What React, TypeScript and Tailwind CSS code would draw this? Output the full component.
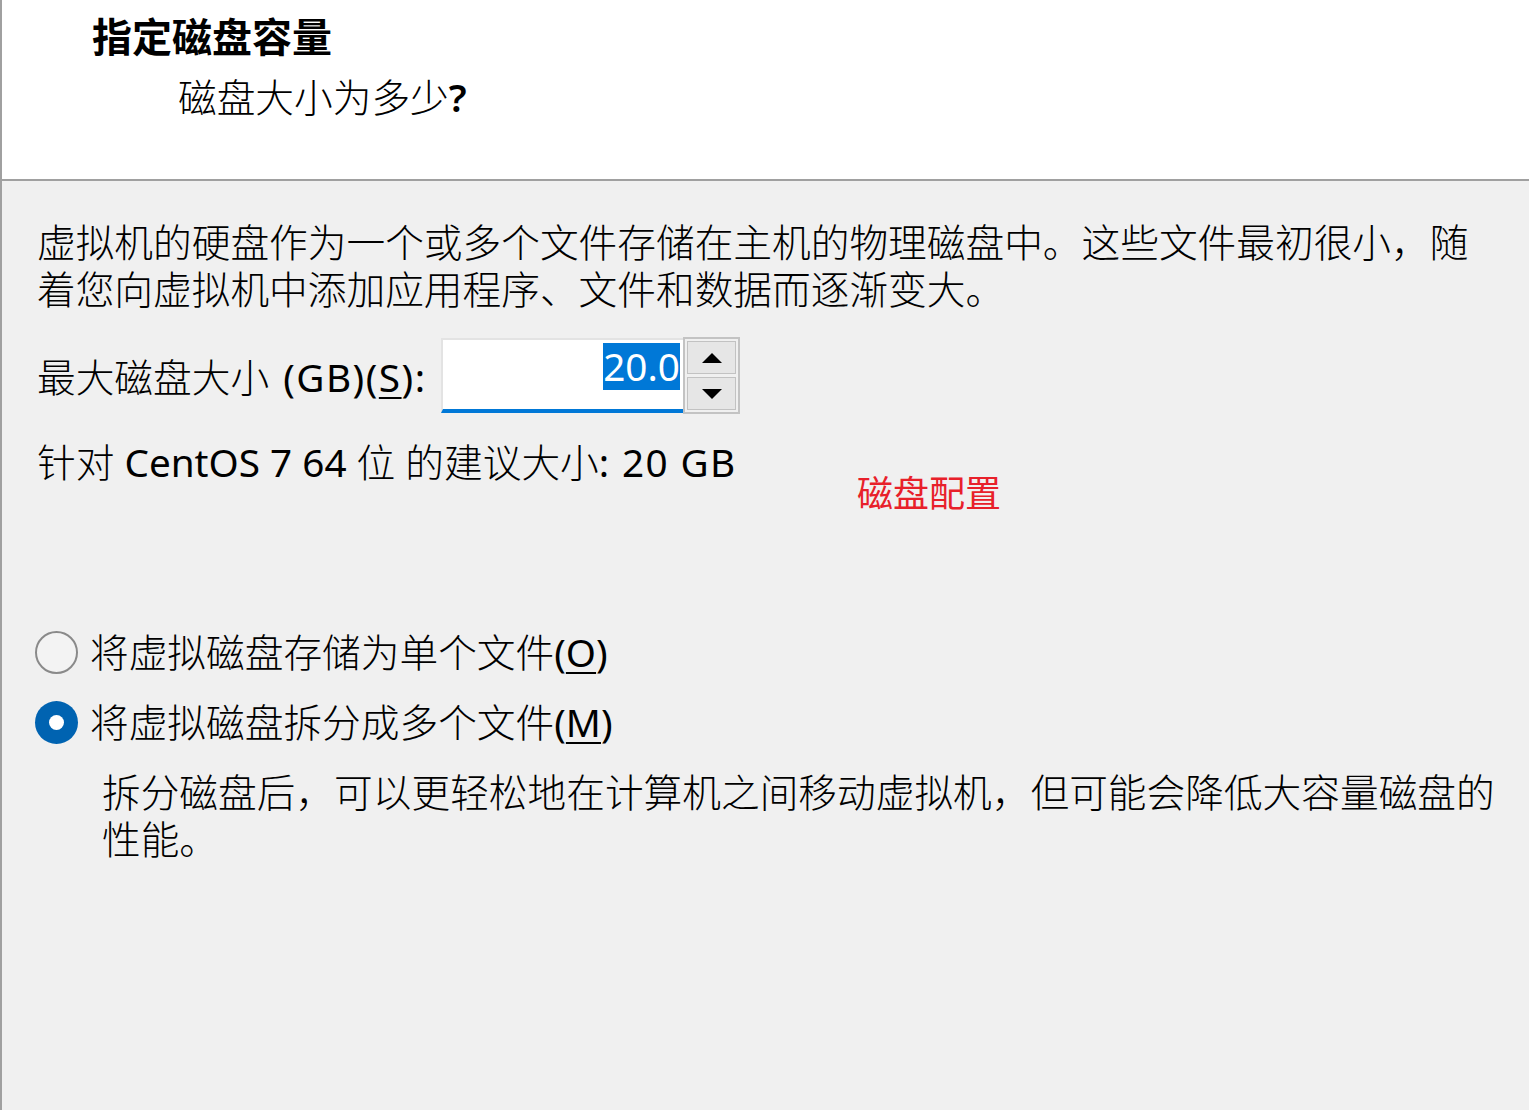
import React from "react";

const CJK = "font-[family-name:'Noto_Sans','Noto_Sans_CJK_SC',sans-serif]";

function Key({ children }: { children: React.ReactNode }) {
  // Windows-style access key: underlined letter
  return (
    <span className="underline decoration-[2px] underline-offset-[5px]">{children}</span>
  );
}

function Radio({ checked }: { checked?: boolean }) {
  if (checked) {
    return (
      <span className="flex h-[43px] w-[43px] shrink-0 items-center justify-center rounded-full bg-[#0063b1]">
        <span className="h-[15px] w-[15px] rounded-full bg-white" />
      </span>
    );
  }
  return (
    <span className="h-[43px] w-[43px] shrink-0 rounded-full border-2 border-[#8a8a8a] bg-[#f3f3f3]" />
  );
}

function Spinner() {
  return (
    <div className="flex h-[77px] w-[57px] shrink-0 flex-col gap-[3px] border-2 border-[#c3c3c3] bg-[#f0f0f0] p-[2px]">
      <button className="flex flex-1 items-center justify-center border border-[#c2c2c2] bg-[#e6e6e6]">
        <svg width="20" height="10" viewBox="0 0 20 10">
          <path d="M10 0 L20 10 L0 10 Z" fill="#000" />
        </svg>
      </button>
      <button className="flex flex-1 items-center justify-center border border-[#c2c2c2] bg-[#e6e6e6]">
        <svg width="20" height="10" viewBox="0 0 20 10">
          <path d="M0 0 L20 0 L10 10 Z" fill="#000" />
        </svg>
      </button>
    </div>
  );
}

export default function App() {
  return (
    <div
      className={`relative flex h-screen flex-col overflow-hidden border-l-2 border-[#a0a0a0] bg-[#f0f0f0] text-black ${CJK}`}
    >
      <header className="h-[181px] shrink-0 border-b-2 border-[#a0a0a0] bg-white pl-[90px] pt-[13px]">
        <h1 className="text-[40px] font-bold leading-[48px]">指定磁盘容量</h1>
        <p className="ml-[86px] mt-[12px] text-[38.7px] font-light leading-[48px]">
          磁盘大小为多少<span className="font-semibold">?</span>
        </p>
      </header>

      <main className="pl-[35px] pt-[38px] text-[38.7px] font-light leading-[47px]">
        <p className="w-[1450px]">
          虚拟机的硬盘作为一个或多个文件存储在主机的物理磁盘中。这些文件最初很小，随着您向虚拟机中添加应用程序、文件和数据而逐渐变大。
        </p>

        <div className="mt-[24px] flex h-[77px] items-center">
          <label className="w-[404px] shrink-0 pt-[3px]">
            最大磁盘大小{" "}
            <span className="ml-[4px] font-normal tracking-[1.5px]">
              (GB)(<Key>S</Key>):
            </span>
          </label>
          <div className="flex h-[75px] w-[242px] shrink-0 justify-end border-l-2 border-t-2 border-b-[4px] border-l-[#e3e3e3] border-t-[#e3e3e3] border-b-[#0078d7] bg-white pr-[3px] pt-[3px]">
            <span className="h-[47px] bg-[#0078d7] font-normal leading-[47px] text-white">20.0</span>
          </div>
          <Spinner />
        </div>

        <p className="mt-[25px]">
          针对 <span className="font-normal">CentOS 7 64</span> 位 的建议大小
          <span className="font-normal tracking-[1.4px]">: 20 GB</span>
        </p>

        <div className="-ml-[2px] mt-[143px] flex h-[47px] items-center gap-[12px]">
          <Radio />
          <span>
            将虚拟磁盘存储为单个文件<span className="font-normal">(<Key>O</Key>)</span>
          </span>
        </div>

        <div className="-ml-[2px] mt-[23px] flex h-[47px] items-center gap-[12px]">
          <Radio checked />
          <span>
            将虚拟磁盘拆分成多个文件<span className="font-normal">(<Key>M</Key>)</span>
          </span>
        </div>

        <p className="ml-[65px] mt-[23px]">
          拆分磁盘后，可以更轻松地在计算机之间移动虚拟机，但可能会降低大容量磁盘的性能。
        </p>
      </main>

      <span className="absolute left-[855px] top-[474px] text-[36px] leading-[40px] text-[#e8202a]">
        磁盘配置
      </span>
    </div>
  );
}
